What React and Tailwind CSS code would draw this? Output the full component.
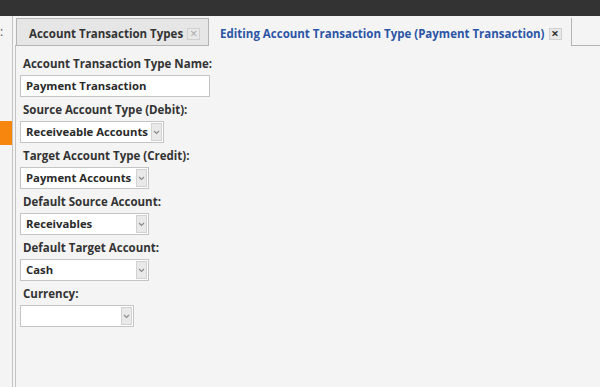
import React from "react";

const font = { fontFamily: '"Open Sans", "Noto Sans", sans-serif' };

const Chevron = () => (
  <svg width="7" height="5" viewBox="0 0 7 5" className="block">
    <path d="M1 1 L3.5 3.5 L6 1" fill="none" stroke="#8a8a8a" strokeWidth="1.2" />
  </svg>
);

const Select = ({ value, width }) => (
  <div
    className={`flex h-[22px] items-stretch border border-[#c4c4c4] bg-white ${width}`}
  >
    <div className="flex-1 truncate pl-[5px] text-[11.3px] leading-[20px] font-bold text-[#2a2a2a]">
      {value}
    </div>
    <div className="my-[1px] mr-[1px] flex w-[11px] items-center justify-center border border-[#d2d2d2] bg-[#e9e9e9]">
      <Chevron />
    </div>
  </div>
);

const Field = ({ label, children }) => (
  <div className="flex flex-col pt-[4px]">
    <div className="h-[18px] pl-[3px] text-[11.5px] leading-[18px] font-bold text-[#333]">
      {label}
    </div>
    <div className="pt-[2px]">{children}</div>
  </div>
);

const CloseBox = ({ active }) => (
  <span
    className={`ml-[4px] flex h-[12px] w-[13px] items-center justify-center border border-[#d0d0d0] bg-[#e8e8e8] text-[13px] leading-none ${
      active ? "font-bold text-[#333]" : "text-[#a8a8a8]"
    }`}
  >
    ×
  </span>
);

export default function App() {
  return (
    <div
      className="flex h-[387px] w-[600px] flex-col overflow-hidden bg-[#f4f4f4]"
      style={font}
    >
      <div className="h-[16px] bg-[#333333]" />
      <div className="flex flex-1">
        {/* left collapsed panel */}
        <div className="relative w-[13px] border-r border-[#c4c4c4]">
          <div className="pt-[9px] text-[12px] leading-[14px] text-[#555]">:</div>
          <div className="mt-[82px] h-[24px] w-[12px] bg-[#f7860f]" />
        </div>
        <div className="w-[2px]" />
        {/* main area */}
        <div className="flex flex-1 flex-col">
          {/* tabs */}
          <div className="flex h-[30px] items-end">
            <div className="h-[30px] w-[1px] border-b border-[#b4b4b4]" />
            <div className="flex h-[28px] items-center border border-[#b4b4b4] bg-[#e6e6e6] pl-[12px] pr-[8px] pt-[3px]">
              <span className="text-[11.5px] font-bold text-[#333]">
                Account Transaction Types
              </span>
              <CloseBox />
            </div>
            <div className="flex h-[28px] items-center border-r border-[#b4b4b4] pl-[11px] pr-[9px] pt-[3px]">
              <span className="text-[11.5px] font-bold text-[#2b55a5]">
                Editing Account Transaction Type (Payment Transaction)
              </span>
              <CloseBox active />
            </div>
            <div className="h-[30px] flex-1 border-b border-[#b4b4b4]" />
          </div>
          {/* content */}
          <div className="flex flex-1 flex-col border-l border-[#c4c4c4] pl-[4px] pt-[5px]">
            <Field label="Account Transaction Type Name:">
              <div className="h-[22px] w-[190px] border border-[#c4c4c4] bg-white pl-[5px] text-[11.3px] leading-[20px] font-bold text-[#2a2a2a]">
                Payment Transaction
              </div>
            </Field>
            <Field label="Source Account Type (Debit):">
              <Select value="Receiveable Accounts" width="w-[144px]" />
            </Field>
            <Field label="Target Account Type (Credit):">
              <Select value="Payment Accounts" width="w-[129px]" />
            </Field>
            <Field label="Default Source Account:">
              <Select value="Receivables" width="w-[129px]" />
            </Field>
            <Field label="Default Target Account:">
              <Select value="Cash" width="w-[129px]" />
            </Field>
            <Field label="Currency:">
              <Select value="" width="w-[114px]" />
            </Field>
          </div>
        </div>
      </div>
    </div>
  );
}
